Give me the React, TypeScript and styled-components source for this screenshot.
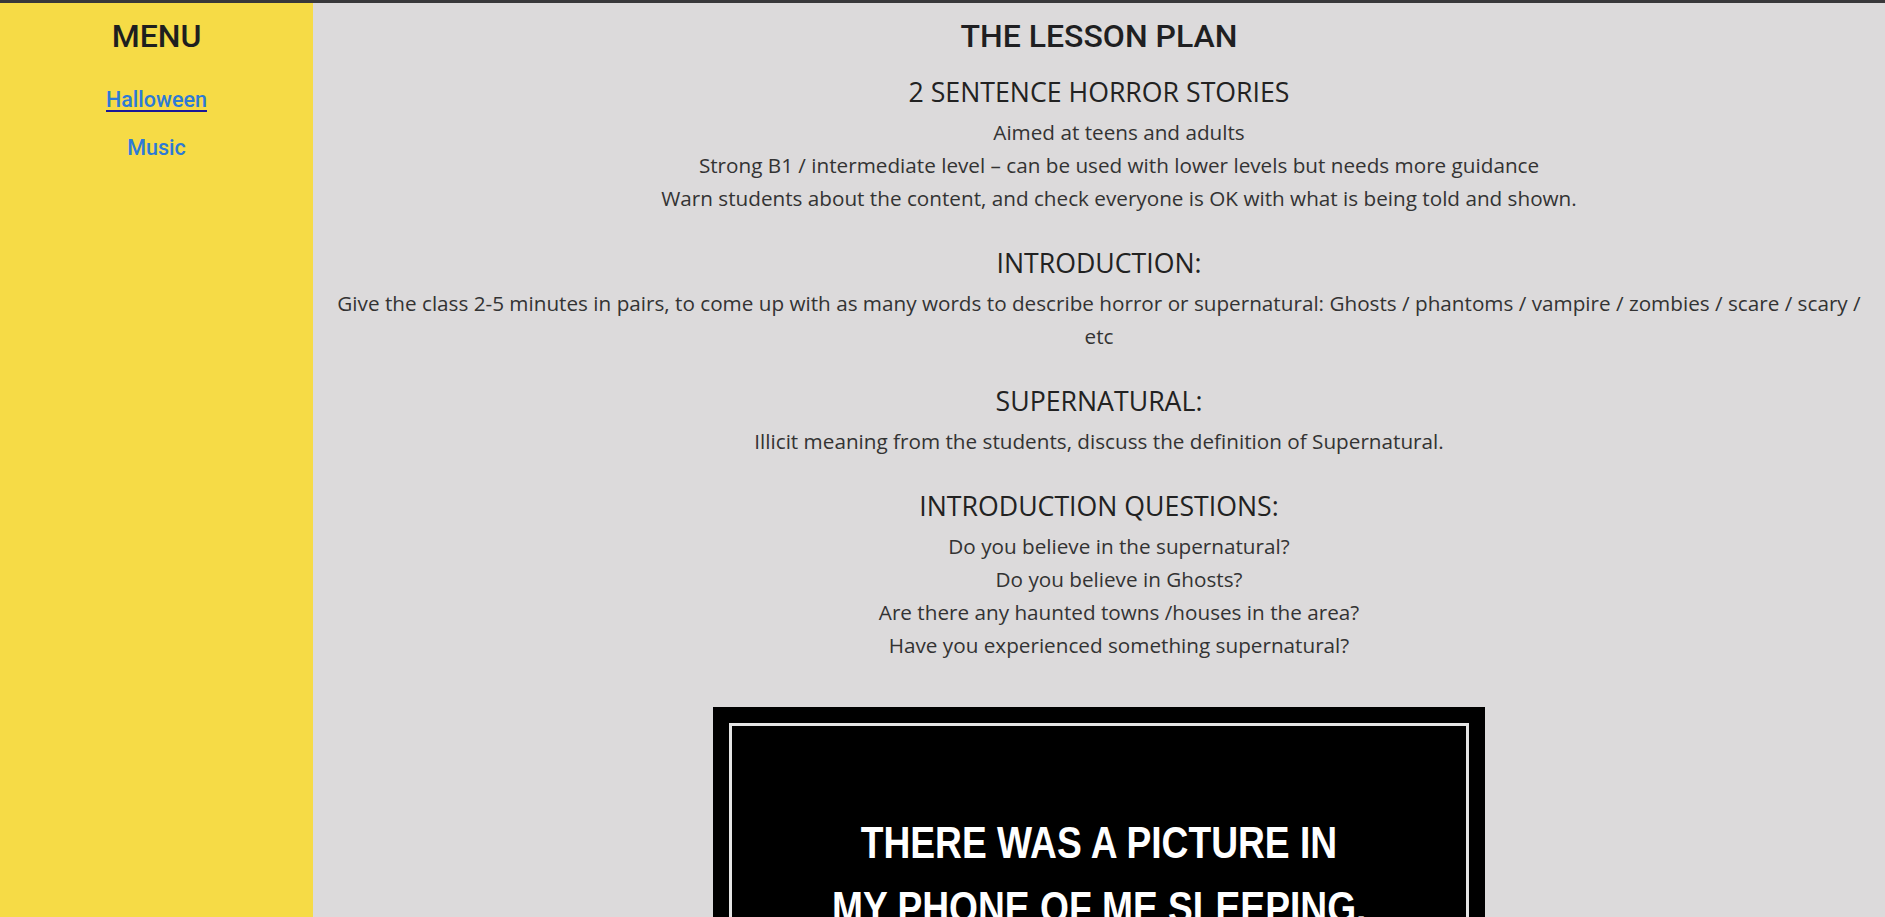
import React from "react";
import styled, { createGlobalStyle } from "styled-components";

const GlobalStyle = createGlobalStyle`
  html, body {
    margin: 0;
    padding: 0;
    overflow: hidden;
  }
  * { box-sizing: border-box; }
`;

const Page = styled.div`
  display: flex;
  height: 100vh;
  border-top: 3px solid #38383a;
`;

const Sidebar = styled.nav`
  width: 313px;
  flex: none;
  background: #f6db46;
  display: flex;
  flex-direction: column;
  align-items: center;
  padding-top: 14px;
  font-family: Roboto, "Liberation Sans", sans-serif;
`;

const MenuTitle = styled.h2`
  margin: 0 0 33px;
  font-size: 32px;
  line-height: 38px;
  font-weight: 500;
  color: #1f1f1f;
`;

const MenuLink = styled.a<{ $active?: boolean }>`
  display: block;
  font-size: 21.5px;
  line-height: 24px;
  font-weight: 500;
  color: #2d7ad6;
  margin-bottom: 24px;
  text-decoration: ${(p) => (p.$active ? "underline" : "none")};
  text-decoration-color: #1b1898;
  text-decoration-thickness: 2px;
  text-underline-offset: 3px;
`;

const Main = styled.main`
  flex: 1;
  background: #dcdadb;
  padding: 13px 16px 0;
  text-align: center;
  overflow: hidden;
  color: #333;
  font-family: "Open Sans", "Noto Sans", sans-serif;
`;

const PageTitle = styled.h1`
  margin: 0 0 18px;
  font-family: Roboto, "Liberation Sans", sans-serif;
  font-size: 32px;
  line-height: 40px;
  font-weight: 500;
  color: #1f1f22;
`;

const SectionTitle = styled.h3<{ $first?: boolean }>`
  margin: ${(p) => (p.$first ? "0" : "30px")} 0 6px;
  font-size: 26.7px;
  line-height: 36px;
  font-weight: 400;
  color: #222;
`;

const Para = styled.p`
  margin: 0;
  font-size: 20.7px;
  line-height: 33px;
`;

const List = styled.ul`
  margin: 0;
  padding: 0 0 0 40px;
  list-style: none;
`;

const Item = styled.li`
  font-size: 20.7px;
  line-height: 33px;
`;

const Poster = styled.div`
  width: 772px;
  height: 560px;
  margin: 45px auto 0;
  background: #000;
  padding: 16px;
`;

const PosterFrame = styled.div`
  height: 100%;
  border: 3px solid #e4e4e4;
  padding-top: 84px;
  display: flex;
  flex-direction: column;
  align-items: center;
`;

const PosterLine = styled.span`
  display: block;
  font-family: "Liberation Sans", Arial, sans-serif;
  font-weight: 700;
  font-size: 44px;
  line-height: 65px;
  color: #fff;
  white-space: nowrap;
  transform: scaleX(0.845);
`;

export default function App() {
  return (
    <>
      <GlobalStyle />
      <Page>
        <Sidebar>
          <MenuTitle>MENU</MenuTitle>
          <MenuLink href="#" $active>
            Halloween
          </MenuLink>
          <MenuLink href="#">Music</MenuLink>
        </Sidebar>
        <Main>
          <PageTitle>THE LESSON PLAN</PageTitle>
          <SectionTitle $first>2 SENTENCE HORROR STORIES</SectionTitle>
          <List>
            <Item>Aimed at teens and adults</Item>
            <Item>Strong B1 / intermediate level – can be used with lower levels but needs more guidance</Item>
            <Item>Warn students about the content, and check everyone is OK with what is being told and shown.</Item>
          </List>

          <SectionTitle>INTRODUCTION:</SectionTitle>
          <Para>
            Give the class 2-5 minutes in pairs, to come up with as many words to describe horror or supernatural: Ghosts
            / phantoms / vampire / zombies / scare / scary / etc
          </Para>

          <SectionTitle>SUPERNATURAL:</SectionTitle>
          <Para>Illicit meaning from the students, discuss the definition of Supernatural.</Para>

          <SectionTitle>INTRODUCTION QUESTIONS:</SectionTitle>
          <List>
            <Item>Do you believe in the supernatural?</Item>
            <Item>Do you believe in Ghosts?</Item>
            <Item>Are there any haunted towns /houses in the area?</Item>
            <Item>Have you experienced something supernatural?</Item>
          </List>

          <Poster>
            <PosterFrame>
              <PosterLine>THERE WAS A PICTURE IN</PosterLine>
              <PosterLine>MY PHONE OF ME SLEEPING.</PosterLine>
            </PosterFrame>
          </Poster>
        </Main>
      </Page>
    </>
  );
}
